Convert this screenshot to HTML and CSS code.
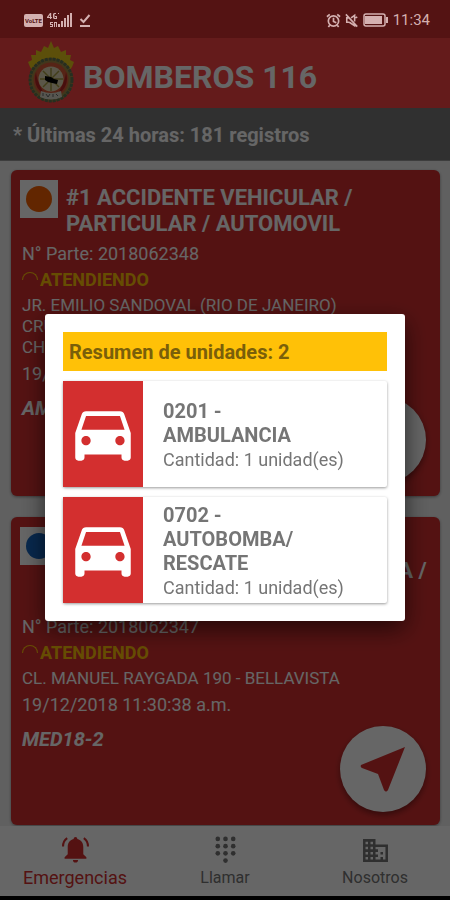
FILE: index.html
```html
<!DOCTYPE html>
<html lang="es">
<head>
    <meta charset="UTF-8">
    <meta name="viewport" content="width=device-width, initial-scale=1.0">
    <title>Bomberos 116</title>
    <link rel="stylesheet" href="styles.css">
</head>
<body>
    <div class="status-bar">
        <div class="status-group">
            <span class="volte">VoLTE</span>
            <svg class="signal" viewBox="0 0 26 16" fill="currentColor">
                <path d="M3 1 0 5v1h3v1h1.200V6H5V5h-.8V1zM3 3v2H1.500zM9 1H7L6 2v4l1 1h3V4H8v1h1v1H7.500V2H9zM11 1h1v1h-1z"/>
                <path d="M3 10h3v1H4v1h2v3H3v-1h2v-1H3zM7 10h3v5H9v-4H8v4H7z"/>
                <path d="M11 12h2v3h-2zM14 9h2v6h-2zM17 6h2v9h-2zM20 3h2v12h-2zM23 1h2v14h-2z"/>
            </svg>
            <svg class="check" viewBox="0 0 12 15" fill="none" stroke="currentColor" stroke-width="2">
                <path d="M1.500 6 4.500 9 10.500 2M1 13h10"/>
            </svg>
        </div>
        <div class="status-group">
            <svg class="alarm" viewBox="0 0 16 16" fill="none" stroke="currentColor" stroke-width="1.800">
                <circle cx="8" cy="8.500" r="5.500"/>
                <path d="M8 5v4l3 1.500M1 4l3-2.500M15 4l-3-2.500M4 13l-1.500 2M12 13l1.500 2"/>
            </svg>
            <svg class="mute" viewBox="0 0 16 16" fill="none" stroke="currentColor" stroke-width="1.800">
                <path d="M5 10H2V5h2M7 5l4-3v7M5 10l6 4v-3M12 5l2-1M1 1l13 14"/>
            </svg>
            <svg class="battery" viewBox="0 0 26 14">
                <rect x="1" y="1" width="21" height="12" rx="2" fill="none" stroke="currentColor" stroke-width="1.500"/>
                <rect x="2" y="3" width="17" height="8" fill="currentColor"/>
                <path d="M23 4h2v6h-2z" fill="currentColor"/>
            </svg>
            <span>11:34</span>
        </div>
    </div>

    <header class="header">
        <svg class="logo" viewBox="0 0 48 64">
            <path d="M3 26 1 21l4-2-1-5 5 0 0-5 5 2 3-6 4 2 3-7 3 7 4-2 3 6 5-2 0 5 5 0-1 5 4 2-2 5-3 4H6z" fill="#e6c619"/>
            <circle cx="24" cy="39" r="22" fill="#a38a45"/>
            <circle cx="24" cy="39" r="21" fill="none" stroke="#5f7350" stroke-width="3" stroke-dasharray="3 1"/>
            <circle cx="24" cy="39" r="17.500" fill="#d65a37"/>
            <path d="M9 31c1 10 5 15 8 22-7-4-11-12-8-22zM39 31c-1 10-5 15-8 22 7-4 11-12 8-22z" fill="#b52525"/>
            <circle cx="24" cy="38" r="12.500" fill="#e2d8b4"/>
            <path d="M24 27v23M13 38h23M16 30l16 16M32 30 16 46" stroke="#a69b43" stroke-width="1.500"/>
            <path d="M18 35l6 1 3 2 4 1-1 4-5-1-4-1-3-2z" fill="#000"/>
            <path d="M14 50q10 4 20 0l1 6q-11 5-22 0z" fill="#d9d7c9"/>
            <path d="M16 52v3M19 53l2 3 2-3M26 53v3M29 53l2 2" stroke="#666" fill="none"/>
        </svg>
        <h1>BOMBEROS 116</h1>
    </header>
    <p class="summary">* Últimas 24 horas: 181 registros</p>

    <main class="list">
        <article class="card card-first">
            <div class="card-head">
                <span class="marker"><i class="dot orange"></i></span>
                <h2>#1 ACCIDENTE VEHICULAR / PARTICULAR / AUTOMOVIL</h2>
            </div>
            <p>N° Parte: 2018062348</p>
            <p class="state"><i class="spinner"></i>ATENDIENDO</p>
            <p class="address">JR. EMILIO SANDOVAL (RIO DE JANEIRO)<br>CRUCE<br>CHORRILLOS</p>
            <p>19/12/2018</p>
            <p class="units">AMB-1</p>
            <button class="fab" aria-label="Ver ruta">
                <svg viewBox="0 0 46 46"><path d="M45 1 1 19q-1 2 1 3l16 6 6 16q2 3 4 0z" fill="currentColor"/></svg>
            </button>
        </article>

        <article class="card card-last">
            <div class="card-head">
                <span class="marker"><i class="dot blue"></i></span>
                <h2>#2 EMERGENCIA MEDICA /<br>PERSONAS HERIDAS EN VIVIENDA /<br>CAIDA</h2>
            </div>
            <p>N° Parte: 2018062347</p>
            <p class="state"><i class="spinner"></i>ATENDIENDO</p>
            <p class="address">CL. MANUEL RAYGADA 190 - BELLAVISTA</p>
            <p>19/12/2018 11:30:38 a.m.</p>
            <p class="units">MED18-2</p>
            <button class="fab" aria-label="Ver ruta">
                <svg viewBox="0 0 46 46"><path d="M45 1 1 19q-1 2 1 3l16 6 6 16q2 3 4 0z" fill="currentColor"/></svg>
            </button>
        </article>
    </main>

    <nav class="tabs">
        <a class="tab active" href="#emergencias">
            <svg viewBox="0 0 26 26" fill="currentColor">
                <path d="M13 1c1 0 1.800.8 1.800 1.800 4 1 5.700 4 5.700 7.700v7l3 3V22h-21v-1.500l3-3v-7c0-3.700 1.700-6.700 5.700-7.700C11.200 1.800 12 1 13 1zM10.500 23h5c0 1.500-1 2.500-2.500 2.500s-2.500-1-2.500-2.500z"/>
                <path d="M5 2C2 4 1 7 1 10M21 2c3 2 4 5 4 8" fill="none" stroke="currentColor" stroke-width="2"/>
            </svg>
            <span>Emergencias</span>
        </a>
        <a class="tab" href="#llamar">
            <svg viewBox="0 0 26 28" fill="currentColor">
                <circle cx="5" cy="3" r="2.400"/><circle cx="13" cy="3" r="2.400"/><circle cx="21" cy="3" r="2.400"/>
                <circle cx="5" cy="10.500" r="2.400"/><circle cx="13" cy="10.500" r="2.400"/><circle cx="21" cy="10.500" r="2.400"/>
                <circle cx="5" cy="18" r="2.400"/><circle cx="13" cy="18" r="2.400"/><circle cx="21" cy="18" r="2.400"/>
                <circle cx="13" cy="25.500" r="2.400"/>
            </svg>
            <span>Llamar</span>
        </a>
        <a class="tab" href="#nosotros">
            <svg viewBox="-1 -2 26 26" fill="currentColor">
                <path d="M12 6.300V1H0v22h24V6.300H12zM4.800 20.600H2.400v-2.400h2.400v2.400zm0-4.900H2.400v-2.400h2.400v2.400zm0-4.900H2.400V8.400h2.400v2.400zm0-4.800H2.400V3.600h2.400V6zm4.800 14.600H7.200v-2.400h2.400v2.400zm0-4.900H7.200v-2.400h2.400v2.400zm0-4.900H7.200V8.400h2.400v2.400zm0-4.800H7.200V3.600h2.400V6zm12 14.600H12v-2.400h2.400v-2.500H12v-2.400h2.400v-2.500H12V8.700h9.600v11.900zm-2.400-7.300h-2.400v2.400h2.400v-2.400zm0 4.900h-2.400v2.400h2.400v-2.400z"/>
            </svg>
            <span>Nosotros</span>
        </a>
    </nav>

    <!-- Units dialog -->
    <div class="overlay">
        <section class="dialog" role="dialog" aria-labelledby="dialog-title">
            <h3 id="dialog-title">Resumen de unidades: 2</h3>
            <div class="unit">
                <div class="thumb">
                    <svg viewBox="0 0 24 24" fill="currentColor"><path d="M18.920 5.010C18.720 4.420 18.160 4 17.500 4h-11c-.66 0-1.210.42-1.420 1.010L3 11v8c0 .55.45 1 1 1h1c.55 0 1-.45 1-1v-1h12v1c0 .55.45 1 1 1h1c.55 0 1-.45 1-1v-8l-2.080-5.990zM6.500 15c-.83 0-1.500-.67-1.500-1.500S5.670 12 6.500 12s1.500.67 1.500 1.500S7.330 15 6.500 15zm11 0c-.83 0-1.500-.67-1.500-1.500s.67-1.500 1.500-1.500 1.500.67 1.500 1.500-.67 1.500-1.500 1.500zM5 10l1.500-4.500h11L19 10H5z"/></svg>
                </div>
                <div class="unit-text">
                    <h4>0201 -<br>AMBULANCIA</h4>
                    <p>Cantidad: 1 unidad(es)</p>
                </div>
            </div>
            <div class="unit">
                <div class="thumb">
                    <svg viewBox="0 0 24 24" fill="currentColor"><path d="M18.920 5.010C18.720 4.420 18.160 4 17.500 4h-11c-.66 0-1.210.42-1.420 1.010L3 11v8c0 .55.45 1 1 1h1c.55 0 1-.45 1-1v-1h12v1c0 .55.45 1 1 1h1c.55 0 1-.45 1-1v-8l-2.080-5.990zM6.500 15c-.83 0-1.500-.67-1.500-1.500S5.670 12 6.500 12s1.500.67 1.500 1.500S7.330 15 6.500 15zm11 0c-.83 0-1.500-.67-1.500-1.500s.67-1.500 1.500-1.500 1.500.67 1.500 1.500-.67 1.500-1.500 1.500zM5 10l1.500-4.500h11L19 10H5z"/></svg>
                </div>
                <div class="unit-text">
                    <h4>0702 -<br>AUTOBOMBA/<br>RESCATE</h4>
                    <p>Cantidad: 1 unidad(es)</p>
                </div>
            </div>
        </section>
    </div>
</body>
</html>
```

FILE: styles.css
```css
/* Basic Styling */
* {
    box-sizing: border-box;
    margin: 0;
}

body {
    min-height: 100vh;
    display: flex;
    flex-direction: column;
    font-family: Roboto, "Liberation Sans", sans-serif;
    background-color: #f0f0f0;
    border-bottom: 4px solid #000;
}

/* Phone status bar, stays above the overlay */
.status-bar {
    position: relative;
    z-index: 20;
    height: 38px;
    padding: 2px 20px 0 24px;
    display: flex;
    justify-content: space-between;
    align-items: center;
    background-color: #541313;
    color: #d4b0b0;
    font-size: 15px;
}

.status-group {
    display: flex;
    align-items: center;
    gap: 4px;
}

.volte {
    padding: 0 1px;
    border-radius: 2px;
    background-color: #d4b0b0;
    color: #541313;
    font-size: 6px;
    font-weight: bold;
    line-height: 13px;
}

.signal { width: 26px; height: 16px; }
.check { width: 12px; height: 15px; margin-left: 2px; }
.alarm { width: 15px; height: 15px; }
.mute { width: 14px; height: 15px; }
.battery { width: 26px; height: 14px; }

/* Header */
.header {
    height: 70px;
    padding: 0 27px;
    display: flex;
    align-items: center;
    gap: 8px;
    background-color: #fa4444;
    color: #fff;
}

.logo {
    width: 48px;
    height: 64px;
}

h1 {
    padding-top: 8px;
    font-size: 32px;
    line-height: 40px;
}

.summary {
    padding: 15px 13px 13px;
    background-color: #787878;
    color: #fff;
    font-size: 20px;
    font-weight: bold;
    line-height: 24px;
    border-bottom: 1px solid #999;
}

/* Emergency cards */
.list {
    flex: 1;
    padding: 9px 10px 0 11px;
    display: flex;
    flex-direction: column;
    gap: 21px;
}

.card {
    position: relative;
    padding: 10px 10px 0;
    border-radius: 6px;
    background-color: #d32f2f;
    box-shadow: 0 1px 3px rgba(0, 0, 0, 0.4);
    color: #fff;
    font-size: 18px;
    line-height: 26px;
}

.card-first { padding-bottom: 75px; }
.card-last { padding-bottom: 73px; }

.card-head {
    display: flex;
    align-items: flex-start;
    gap: 8px;
    margin-bottom: 4px;
}

.marker {
    flex: none;
    width: 38px;
    height: 38px;
    margin-left: -1px;
    display: grid;
    place-items: center;
    background-color: #fff;
}

.dot {
    width: 26px;
    height: 26px;
    border-radius: 50%;
}

.orange { background-color: #f56000; }
.blue { background-color: #1565c0; }

h2 {
    padding-top: 5px;
    font-size: 22px;
    line-height: 26px;
}

.card p {
    padding-left: 1px;
}

.state {
    display: flex;
    align-items: center;
    gap: 2px;
    color: #ffc107;
    font-weight: bold;
}

.spinner {
    width: 16px;
    height: 8px;
    margin-bottom: 8px;
    border: 1px solid #ffc107;
    border-bottom: none;
    border-radius: 8px 8px 0 0;
}

.card .address {
    padding-top: 2px;
    padding-bottom: 3px;
    font-size: 17px;
    line-height: 21px;
}

.card .units {
    padding-top: 8px;
    font-size: 20px;
    font-weight: bold;
    font-style: italic;
}

.fab {
    position: absolute;
    right: 14px;
    bottom: 13px;
    width: 86px;
    height: 86px;
    padding: 0;
    border: none;
    border-radius: 50%;
    background-color: #fff;
    box-shadow: 0 3px 6px rgba(0, 0, 0, 0.4);
    color: #d32f2f;
    cursor: pointer;
}

.fab svg {
    width: 46px;
    height: 46px;
    vertical-align: middle;
}

/* Bottom navigation */
.tabs {
    position: relative;
    height: 70px;
    display: flex;
    background-color: #fff;
}

.tab {
    flex: 1;
    padding-top: 10px;
    display: flex;
    flex-direction: column;
    align-items: center;
    gap: 5px;
    color: #757575;
    font-size: 16px;
    line-height: 20px;
    text-decoration: none;
}

.tab svg {
    width: 27px;
    height: 27px;
}

.active {
    color: #d32f2f;
    font-size: 18px;
}

/* Dialog */
.overlay {
    position: fixed;
    inset: 0;
    z-index: 10;
    padding: 38px 0 4px;
    display: flex;
    justify-content: center;
    align-items: center;
    background-color: rgba(0, 0, 0, 0.6);
}

.dialog {
    width: 80%;
    padding: 18px;
    display: flex;
    flex-direction: column;
    gap: 10px;
    border-radius: 3px;
    background-color: #fff;
    box-shadow: 0 8px 24px rgba(0, 0, 0, 0.6);
    color: #757575;
}

h3 {
    padding: 8px 6px 7px;
    background-color: #ffc107;
    color: #7a5f0a;
    font-size: 20px;
    line-height: 24px;
}

.unit {
    min-height: 106px;
    display: flex;
    border-radius: 2px;
    box-shadow: 0 1px 3px rgba(0, 0, 0, 0.4);
}

.thumb {
    width: 80px;
    padding-top: 5px;
    display: grid;
    place-items: center;
    background-color: #d32f2f;
    color: #fff;
}

.thumb svg {
    width: 74px;
    height: 74px;
}

.unit-text {
    padding: 6px 20px 2px;
    align-self: center;
    font-size: 18px;
    line-height: 26px;
}

h4 {
    font-size: 20px;
    line-height: 24px;
}
```
